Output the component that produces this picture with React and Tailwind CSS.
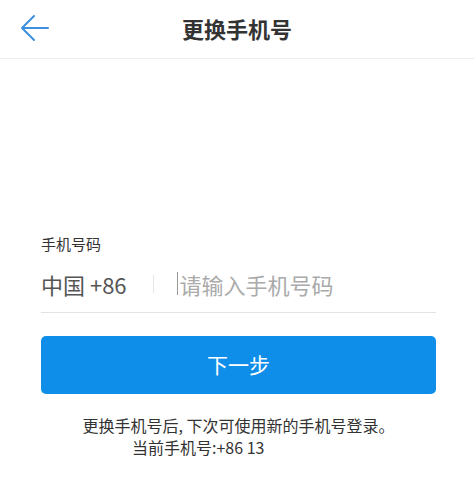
import React from 'react';

const font = { fontFamily: '"Noto Sans CJK SC", "Noto Sans", sans-serif' };

export default function App() {
  return (
    <div className="w-[474px] h-[478px] bg-white" style={font}>
      {/* Header */}
      <header className="relative h-[59px] border-b border-[#eeeeee] flex items-center justify-center">
        <button className="absolute left-[20px] top-[13px] w-[30px] h-[30px] flex items-center justify-center" aria-label="back">
          <svg width="30" height="28" viewBox="0 0 30 28" fill="none" stroke="#3d8fe0" strokeWidth="2" strokeLinecap="round" strokeLinejoin="round">
            <path d="M28 14H3" />
            <path d="M14 2L2 14l12 12" />
          </svg>
        </button>
        <h1 className="text-[22px] font-bold text-[#333333] -mt-[2px]">更换手机号</h1>
      </header>

      <main className="pl-[41px] pr-[38px] pt-[173px]">
        <label className="block text-[15px] text-[#333333] leading-[24px]">手机号码</label>

        <div className="mt-[5px] flex items-center h-[52px] pb-[6px] border-b border-[#e3e3e3]">
          <span className="text-[22px] text-[#555555] leading-none">中国 +86</span>
          <span className="ml-[26px] w-px h-[18px] bg-[#e6e6e6]"></span>
          <span className="ml-[23px] w-px h-[23px] bg-[#999999]"></span>
          <span className="ml-[2px] text-[22px] text-[#aaaaaa] leading-none">请输入手机号码</span>
        </div>

        <button className="mt-[23px] w-full h-[58px] rounded-[5px] bg-[#0e8ee9] text-white text-[21px] flex items-center justify-center">
          下一步
        </button>

        <div className="mt-[20px] text-[16px] text-[#333333] leading-[22px]">
          <p className="text-center">更换手机号后, 下次可使用新的手机号登录。</p>
          <p className="pl-[91px]">当前手机号:+86 13</p>
        </div>
      </main>
    </div>
  );
}
